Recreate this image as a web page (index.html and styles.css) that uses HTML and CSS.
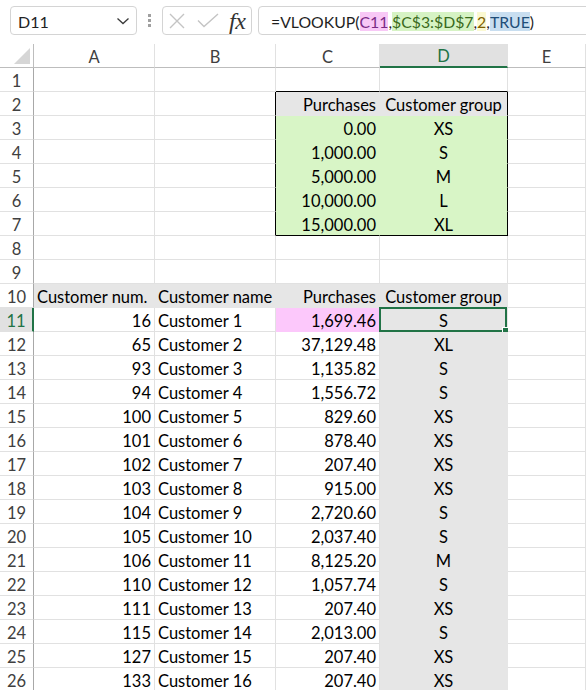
FILE: index.html
```html
<!DOCTYPE html>
<html lang="en">
<head>
<meta charset="utf-8">
<title>VLOOKUP</title>
<link rel="stylesheet" href="styles.css">
</head>
<body>
<div class="topbar">
  <div class="namebox">
    <span class="name">D11</span>
    <svg class="chev" width="14" height="8" viewBox="0 0 14 8"><path d="M1.5 1.5 L7 6.5 L12.5 1.5" fill="none" stroke="#3a3a3a" stroke-width="1.3"/></svg>
  </div>
  <div class="dots"><i></i><i></i><i></i></div>
  <div class="fxbox">
    <svg class="ico" width="16" height="16" viewBox="0 0 16 16"><path d="M1 1 L15 15 M15 1 L1 15" stroke="#c4c4c4" stroke-width="1.4" fill="none"/></svg>
    <svg class="ico chk" width="22" height="15" viewBox="0 0 22 15"><path d="M1 7.5 L7 13.5 L21 1" stroke="#c4c4c4" stroke-width="1.4" fill="none"/></svg>
    <span class="fx">fx</span>
  </div>
  <div class="formula">=VLOOKUP(<span class="ref1">C11</span>,<span class="ref2">$C$3:$D$7</span>,<span class="ref3">2</span>,<span class="ref4">TRUE</span>)</div>
</div>

<div class="sheet">
  <div class="row head">
    <div class="c corner"><span class="tri"></span></div>
    <div class="c ch">A</div><div class="c ch">B</div><div class="c ch">C</div><div class="c ch sel">D</div><div class="c ch">E</div>
  </div>
  <div class="row"><div class="c rh">1</div><div class="c"></div><div class="c"></div><div class="c bB"></div><div class="c bB"></div><div class="c"></div></div>
  <div class="row"><div class="c rh">2</div><div class="c"></div><div class="c bR"></div><div class="c r gray">Purchases</div><div class="c m gray bR">Customer group</div><div class="c"></div></div>
  <div class="row"><div class="c rh">3</div><div class="c"></div><div class="c bR"></div><div class="c r green">0.00</div><div class="c m green bR">XS</div><div class="c"></div></div>
  <div class="row"><div class="c rh">4</div><div class="c"></div><div class="c bR"></div><div class="c r green">1,000.00</div><div class="c m green bR">S</div><div class="c"></div></div>
  <div class="row"><div class="c rh">5</div><div class="c"></div><div class="c bR"></div><div class="c r green">5,000.00</div><div class="c m green bR">M</div><div class="c"></div></div>
  <div class="row"><div class="c rh">6</div><div class="c"></div><div class="c bR"></div><div class="c r green">10,000.00</div><div class="c m green bR">L</div><div class="c"></div></div>
  <div class="row"><div class="c rh">7</div><div class="c"></div><div class="c bR"></div><div class="c r green bB">15,000.00</div><div class="c m green bR bB">XL</div><div class="c"></div></div>
  <div class="row"><div class="c rh">8</div><div class="c"></div><div class="c"></div><div class="c"></div><div class="c"></div><div class="c"></div></div>
  <div class="row"><div class="c rh">9</div><div class="c"></div><div class="c"></div><div class="c"></div><div class="c"></div><div class="c"></div></div>
  <div class="row"><div class="c rh">10</div><div class="c gray">Customer num.</div><div class="c gray">Customer name</div><div class="c r gray">Purchases</div><div class="c m gray">Customer group</div><div class="c"></div></div>
  <div class="row"><div class="c rh sel">11</div><div class="c r">16</div><div class="c">Customer 1</div><div class="c r pink">1,699.46</div><div class="c m gray active">S<span class="selbox"><span class="handle"></span></span></div><div class="c"></div></div>
  <div class="row"><div class="c rh">12</div><div class="c r">65</div><div class="c">Customer 2</div><div class="c r">37,129.48</div><div class="c m gray">XL</div><div class="c"></div></div>
  <div class="row"><div class="c rh">13</div><div class="c r">93</div><div class="c">Customer 3</div><div class="c r">1,135.82</div><div class="c m gray">S</div><div class="c"></div></div>
  <div class="row"><div class="c rh">14</div><div class="c r">94</div><div class="c">Customer 4</div><div class="c r">1,556.72</div><div class="c m gray">S</div><div class="c"></div></div>
  <div class="row"><div class="c rh">15</div><div class="c r">100</div><div class="c">Customer 5</div><div class="c r">829.60</div><div class="c m gray">XS</div><div class="c"></div></div>
  <div class="row"><div class="c rh">16</div><div class="c r">101</div><div class="c">Customer 6</div><div class="c r">878.40</div><div class="c m gray">XS</div><div class="c"></div></div>
  <div class="row"><div class="c rh">17</div><div class="c r">102</div><div class="c">Customer 7</div><div class="c r">207.40</div><div class="c m gray">XS</div><div class="c"></div></div>
  <div class="row"><div class="c rh">18</div><div class="c r">103</div><div class="c">Customer 8</div><div class="c r">915.00</div><div class="c m gray">XS</div><div class="c"></div></div>
  <div class="row"><div class="c rh">19</div><div class="c r">104</div><div class="c">Customer 9</div><div class="c r">2,720.60</div><div class="c m gray">S</div><div class="c"></div></div>
  <div class="row"><div class="c rh">20</div><div class="c r">105</div><div class="c">Customer 10</div><div class="c r">2,037.40</div><div class="c m gray">S</div><div class="c"></div></div>
  <div class="row"><div class="c rh">21</div><div class="c r">106</div><div class="c">Customer 11</div><div class="c r">8,125.20</div><div class="c m gray">M</div><div class="c"></div></div>
  <div class="row"><div class="c rh">22</div><div class="c r">110</div><div class="c">Customer 12</div><div class="c r">1,057.74</div><div class="c m gray">S</div><div class="c"></div></div>
  <div class="row"><div class="c rh">23</div><div class="c r">111</div><div class="c">Customer 13</div><div class="c r">207.40</div><div class="c m gray">XS</div><div class="c"></div></div>
  <div class="row"><div class="c rh">24</div><div class="c r">115</div><div class="c">Customer 14</div><div class="c r">2,013.00</div><div class="c m gray">S</div><div class="c"></div></div>
  <div class="row"><div class="c rh">25</div><div class="c r">127</div><div class="c">Customer 15</div><div class="c r">207.40</div><div class="c m gray">XS</div><div class="c"></div></div>
  <div class="row"><div class="c rh">26</div><div class="c r">133</div><div class="c">Customer 16</div><div class="c r">207.40</div><div class="c m gray">XS</div><div class="c"></div></div>
</div>
</body>
</html>
```

FILE: styles.css
```css
html, body {
  margin: 0;
  padding: 0;
  background: #ffffff;
}
body {
  width: 586px;
  height: 690px;
  overflow: hidden;
  font-family: Lato, "Liberation Sans", sans-serif;
  color: #000000;
}

/* ---------- formula bar ---------- */
.topbar {
  height: 44px;
  box-sizing: border-box;
  padding-top: 6px;
  display: flex;
  align-items: flex-start;
}
.namebox {
  margin-left: 10px;
  width: 127px;
  height: 29px;
  box-sizing: border-box;
  border: 1px solid #d4d4d4;
  border-radius: 4px;
  display: flex;
  align-items: center;
  justify-content: space-between;
  padding: 1px 6px 0 7px;
  font-size: 16px;
  color: #222;
}
.dots {
  margin-left: 11px;
  height: 29px;
  width: 3px;
  display: flex;
  flex-direction: column;
  justify-content: center;
  gap: 2px;
}
.dots i {
  display: block;
  width: 3px;
  height: 3px;
  background: #a0a0a0;
}
.fxbox {
  margin-left: 11px;
  width: 90px;
  height: 29px;
  box-sizing: border-box;
  border: 1px solid #d4d4d4;
  border-radius: 4px;
  display: flex;
  align-items: center;
  padding-left: 6px;
}
.chk {
  margin-left: 12px;
}
.fx {
  margin-left: 10px;
  font-family: "Liberation Serif", "DejaVu Serif", serif;
  font-style: italic;
  font-size: 24px;
  color: #333;
  line-height: 1;
  letter-spacing: -0.5px;
}
.formula {
  margin-left: 6px;
  flex: 1;
  margin-right: -8px;
  height: 29px;
  box-sizing: border-box;
  border: 1px solid #d4d4d4;
  border-radius: 4px;
  display: flex;
  align-items: center;
  padding: 2px 0 0 12px;
  font-size: 15.8px;
  color: #1e1e1e;
  white-space: nowrap;
}
.formula span {
  line-height: 19px;
}
.ref1 { background: #f8c8f6; color: #7a2a85; }
.ref2 { background: #d6f3c4; color: #3a6a1c; }
.ref3 { background: #fbf9d2; color: #7f6000; }
.ref4 { background: #c8def0; color: #1f4e79; }

/* ---------- sheet grid ---------- */
.row {
  display: grid;
  grid-template-columns: 34px 121px 121px 104px 128px 1fr;
  height: 24px;
}
.c {
  box-sizing: border-box;
  height: 24px;
  border-right: 1px solid #e1e1e1;
  border-bottom: 1px solid #e1e1e1;
  padding: 1px 3px 0;
  font-size: 16.5px;
  line-height: 24px;
  white-space: nowrap;
  position: relative;
}
.r { text-align: right; }
.m { text-align: center; }

.rh {
  text-align: center;
  padding: 1px 0 0;
  color: #404040;
  border-right-color: #a8a8a8;
}
.ch {
  text-align: center;
  color: #404040;
  border-bottom-color: #bdbdbd;
}
.corner {
  border-right-color: #bdbdbd;
  border-bottom-color: #bdbdbd;
}
.tri {
  position: absolute;
  right: 3px;
  bottom: 3px;
  width: 0;
  height: 0;
  border-left: 16px solid transparent;
  border-bottom: 16px solid #d6d6d6;
}
.ch.sel {
  background: #e1e1e1;
  color: #217346;
  border-bottom: 2px solid #217346;
  line-height: 23px;
}
.rh.sel {
  background: #e1e1e1;
  color: #217346;
  border-right: 2px solid #217346;
}

.gray { background: #e6e6e6; border-right-color: transparent; border-bottom-color: transparent; }
.green { background: #d8f5c6; border-right-color: transparent; border-bottom-color: transparent; }
.pink { background: #fcc8fb; border-right-color: transparent; border-bottom-color: transparent; }

.bR { border-right-color: #000000; }
.bB { border-bottom-color: #000000; }

.selbox {
  position: absolute;
  left: -1px;
  top: -1px;
  right: 0;
  bottom: -1px;
  border: 2px solid #217346;
  pointer-events: none;
}
.handle {
  position: absolute;
  right: -4px;
  bottom: -4px;
  width: 5px;
  height: 5px;
  background: #217346;
  border: 1px solid #ffffff;
}
```
